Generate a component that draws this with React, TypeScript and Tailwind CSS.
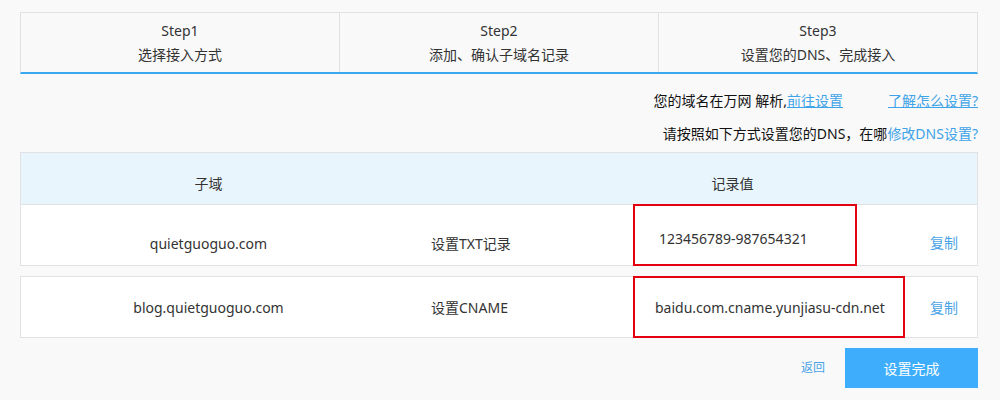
import React from 'react'

const steps = [
  { title: 'Step1', desc: '选择接入方式' },
  { title: 'Step2', desc: '添加、确认子域名记录' },
  { title: 'Step3', desc: '设置您的DNS、完成接入' },
]

const records = [
  { sub: 'quietguoguo.com', type: '设置TXT记录', value: '123456789-987654321', boxW: 'w-[224px]', pad: 'pl-[24px] pt-[23px]', cellPt: 'pt-[29px]', copyPt: 'pt-[28px]' },
  { sub: 'blog.quietguoguo.com', type: '设置CNAME', value: 'baidu.com.cname.yunjiasu-cdn.net', boxW: 'w-[272px]', pad: 'pl-[20px] pt-[20px]', cellPt: 'pt-[21px]', copyPt: 'pt-[21px]' },
]

function RecordRow({ r }: { r: typeof records[number] }) {
  return (
    <div className="flex h-[60px] items-start bg-white">
      <div className={`w-[375px] text-center leading-5 ${r.cellPt}`}>{r.sub}</div>
      <div className={`w-[237px] pl-[35px] leading-5 ${r.cellPt}`}>{r.type}</div>
      <div className="w-[272px] self-stretch">
        <div className={`-my-px h-[62px] border-2 border-[#e5000f] leading-5 ${r.boxW} ${r.pad}`}>{r.value}</div>
      </div>
      <div className={`pl-[25px] leading-5 text-[#4aa3e6] ${r.copyPt}`}>复制</div>
    </div>
  )
}

export default function App() {
  return (
    <div className="min-h-[400px] bg-[#f9f9f9] px-[20px] pt-[12px] text-[14px] text-[#333] font-['Noto_Sans','Noto_Sans_CJK_SC',sans-serif]">
      <div className="w-[958px]">
        {/* steps */}
        <div className="flex border border-[#e2e2e2] border-b-2 border-b-[#3aa8f0]">
          {steps.map((s, i) => (
            <div key={s.title} className={`flex-1 pt-[6px] pb-[5px] text-center leading-6 ${i > 0 ? 'border-l border-[#e2e2e2]' : ''}`}>
              <div>{s.title}</div>
              <div>{s.desc}</div>
            </div>
          ))}
        </div>

        <div className="mt-[17px] flex justify-end leading-5">
          <span className="text-[#111]">您的域名在万网 解析,</span>
          <a className="text-[#3ea3e8] underline">前往设置</a>
          <a className="ml-[45px] text-[#3ea3e8] underline">了解怎么设置?</a>
        </div>
        <div className="mt-[13px] flex justify-end leading-5">
          <span className="text-[#111]">请按照如下方式设置您的DNS，在哪</span>
          <a className="text-[#3ea3e8]">修改DNS设置?</a>
        </div>

        {/* table */}
        <div className="mt-[8px] border border-[#e2e2e2]">
          <div className="flex justify-between border-b border-[#e2e2e2] bg-[#e8f5fd] pt-[21px] pb-[10px] leading-5">
            <div className="w-[375px] text-center">子域</div>
            <div className="w-[489px] text-center">记录值</div>
          </div>
          <RecordRow r={records[0]} />
        </div>
        <div className="mt-[10px] border border-[#e2e2e2]">
          <RecordRow r={records[1]} />
        </div>

        <div className="mt-[10px] flex items-center justify-end">
          <a className="mr-[20px] text-[12px] text-[#4aa3e6]">返回</a>
          <button className="h-[40px] w-[133px] bg-[#3eaefc] text-white">设置完成</button>
        </div>
      </div>
    </div>
  )
}
